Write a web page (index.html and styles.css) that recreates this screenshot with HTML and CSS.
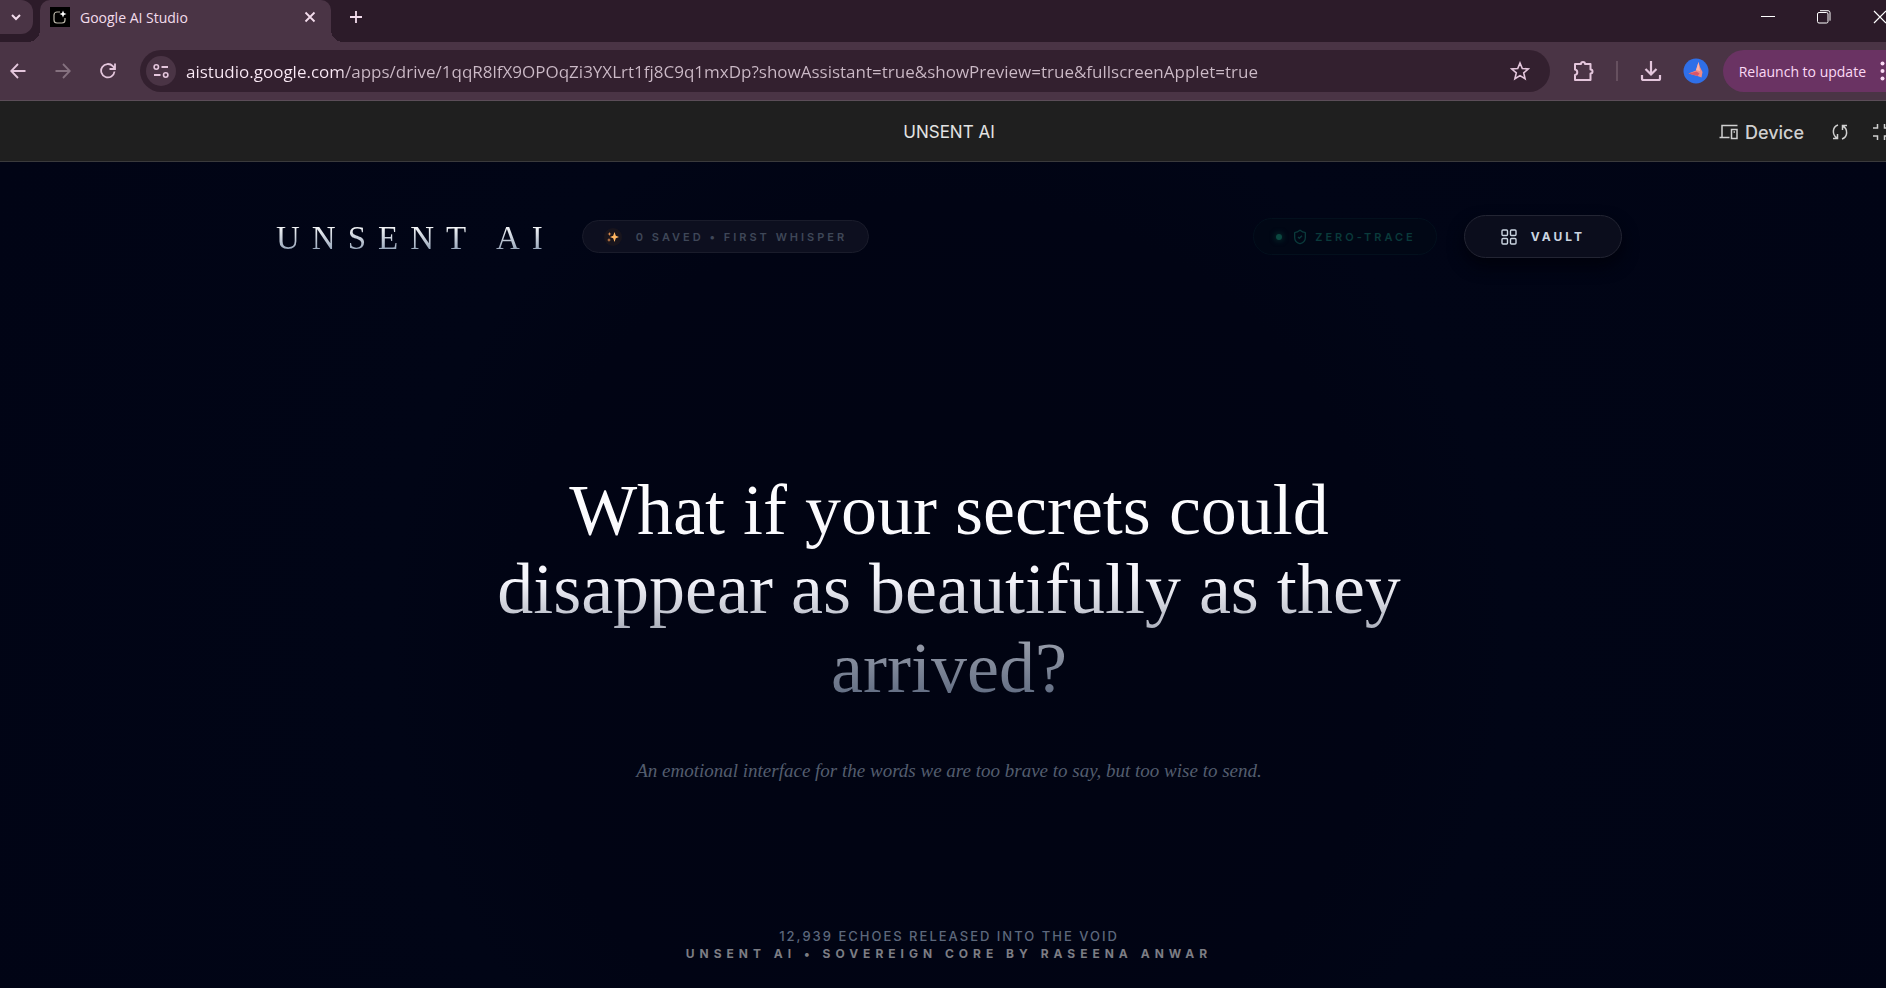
FILE: index.html
```html
<!DOCTYPE html>
<html lang="en">
<head>
    <meta charset="UTF-8">
    <meta name="viewport" content="width=device-width, initial-scale=1.0">
    <title>Google AI Studio</title>
    <link rel="stylesheet" href="styles.css">
</head>
<body>
<div class="window">
    <!-- Browser tabs -->
    <div class="tab-strip">
        <button class="tab-search" aria-label="Search tabs">
            <svg width="12" height="12" viewBox="0 0 12 12"><path d="M2 4l4 4 4-4" stroke-width="2"/></svg>
        </button>
        <div class="tab">
            <svg class="favicon" width="20" height="20" viewBox="0 0 20 20">
                <rect width="20" height="20" fill="#000" stroke="none"/>
                <path d="M10 5H7a3 3 0 0 0-3 3v5a3 3 0 0 0 3 3h5a3 3 0 0 0 3-3v-2" stroke="#b9b5a8" stroke-width="1.2"/>
                <path d="M13 3.500l1 2.500 2.500 1-2.500 1-1 2.500-1-2.500-2.500-1 2.500-1z" fill="#fff" stroke="none"/>
            </svg>
            <span class="tab-title">Google AI Studio</span>
            <button class="icon-btn" aria-label="Close tab">
                <svg width="12" height="12" viewBox="0 0 12 12"><path d="M1.500 1.500l9 9M10.500 1.500l-9 9" stroke-width="1.800"/></svg>
            </button>
        </div>
        <button class="icon-btn new-tab" aria-label="New tab">
            <svg width="14" height="14" viewBox="0 0 14 14"><path d="M7 1v12M1 7h12" stroke-width="1.800"/></svg>
        </button>
        <div class="window-controls">
            <button class="icon-btn" aria-label="Minimize"><svg width="14" height="14" viewBox="0 0 14 14"><path d="M0 6.500h14" stroke="#fff"/></svg></button>
            <button class="icon-btn" aria-label="Restore"><svg width="14" height="14" viewBox="0 0 14 14"><rect x=".5" y="2.500" width="10.500" height="10.500" rx="1.500" stroke="#fff"/><path d="M3 .7h8a2 2 0 0 1 2 2v8" stroke="#fff"/></svg></button>
            <button class="icon-btn" aria-label="Close"><svg width="14" height="14" viewBox="0 0 14 14"><path d="M1 1l12 12M13 1L1 13" stroke="#fff" stroke-width="1.200"/></svg></button>
        </div>
    </div>

    <!-- Address bar -->
    <div class="toolbar">
        <div class="nav-buttons">
            <button class="icon-btn" aria-label="Back"><svg width="16" height="16" viewBox="0 0 16 16"><path d="M15.500 8H1.500M8 1L1.200 8 8 15" stroke-width="1.800"/></svg></button>
            <button class="icon-btn disabled" aria-label="Forward" disabled><svg width="16" height="16" viewBox="0 0 16 16"><path d="M.5 8h14M8 1l6.800 7L8 15" stroke-width="1.800"/></svg></button>
            <button class="icon-btn" aria-label="Reload"><svg width="16" height="16" viewBox="0 0 16 16"><path d="M14.500 8.500A6.700 6.700 0 1 1 12.800 3.200L14.800 5.500M15 .5V6H9.500" stroke-width="1.800"/></svg></button>
        </div>
        <div class="omnibox">
            <button class="site-info" aria-label="Site information">
                <svg width="16" height="16" viewBox="0 0 16 16"><circle cx="3.300" cy="4" r="2.200" stroke-width="1.600"/><path d="M8.500 4H15M1 12h6.500" stroke-width="1.800"/><circle cx="12.700" cy="12" r="2.200" stroke-width="1.600"/></svg>
            </button>
            <input class="url" type="text" aria-label="Address" value="aistudio.google.com/apps/drive/1qqR8lfX9OPOqZi3YXLrt1fj8C9q1mxDp?showAssistant=true&amp;showPreview=true&amp;fullscreenApplet=true">
            <button class="icon-btn" aria-label="Bookmark this tab">
                <svg width="20" height="20" viewBox="0 0 20 20"><path d="M10 2l2.300 5.500 6 .5-4.600 3.900 1.400 5.800L10 14.600l-5.100 3.100 1.400-5.800L1.700 8l6-.5z" stroke-width="1.600"/></svg>
            </button>
        </div>
        <div class="extras">
            <button class="icon-btn" aria-label="Extensions">
                <svg width="22" height="22" viewBox="0 0 22 22"><path d="M2 4h6a2 2 0 0 1 4 0h5.500v5.500a2 2 0 0 1 0 4V20H2v-5a2.800 2.800 0 0 0 0-5.500z" stroke-width="2" stroke-linejoin="round"/></svg>
            </button>
            <span class="divider"></span>
            <button class="icon-btn" aria-label="Downloads">
                <svg width="22" height="22" viewBox="0 0 22 22"><path d="M11 1v13M5.500 9l5.500 5.500L16.500 9M2 15v3.500A1.500 1.500 0 0 0 3.500 20h15a1.500 1.500 0 0 0 1.500-1.500V15" stroke-width="2.200"/></svg>
            </button>
            <button class="icon-btn" aria-label="Profile">
                <svg width="26" height="26" viewBox="0 0 26 26"><circle cx="13" cy="13" r="12.500" fill="#2f6fe8" stroke="none"/><path d="M15.500 4l1.500 5 2.500 5-1 5.500-4-1.500-9-2.500 7.500-3z" fill="#f28b82" stroke="none"/><path d="M13 12l2.500-8 1.500 9z" fill="#ffb3a7" stroke="none"/><path d="M5.500 15.500l8-2 3 2-2 2.500z" fill="#d9566b" stroke="none"/></svg>
            </button>
            <button class="relaunch">
                Relaunch to update
                <svg width="5" height="20" viewBox="0 0 5 20"><g fill="#fbd9f5" stroke="none"><circle cx="2.500" cy="2.500" r="2"/><circle cx="2.500" cy="10" r="2"/><circle cx="2.500" cy="17.500" r="2"/></g></svg>
            </button>
        </div>
    </div>

    <!-- AI Studio bar -->
    <div class="app-bar">
        <span class="app-name">UNSENT AI</span>
        <div class="app-actions">
            <button class="device">
                <svg width="20" height="16" viewBox="0 0 20 16"><path d="M18.500 1.500H3V13M.5 13.500h10M12.500 5.500h5.500v9h-5.500zM14.500 8h1.500" stroke-width="1.500"/></svg>
                Device
            </button>
            <button class="icon-btn" aria-label="Reload app"><svg width="18" height="18" viewBox="0 0 18 18"><path d="M7 2C1 4 1 12 6 15M2 15.500h4.500V11M11 16c6-2 6-10 1-13M16 2.500h-4.500V7" stroke-width="1.500"/></svg></button>
            <button class="icon-btn" aria-label="Exit full screen"><svg width="18" height="18" viewBox="0 0 18 18"><path d="M1 5h4.500V1M12.500 1v4H17M1 13h4.500v4M12.500 17v-4H17" stroke-width="1.500"/></svg></button>
        </div>
    </div>

    <!-- Unsent AI applet -->
    <div class="applet">
        <header class="site-header">
            <div class="brand">
                <span class="logo">UNSENT AI</span>
                <div class="pill saved">
                    <svg width="18" height="18" viewBox="0 0 18 18"><circle cx="9" cy="9" r="9" fill="#19151d" stroke="none"/><path d="M10.500 4l1.300 3.700L15 9l-3.200 1.300L10.500 14l-1.300-3.700L6 9l3.200-1.300z" fill="#ffb661" stroke="none"/><path d="M5.500 4l.6 1.500 1.400.5-1.400.5-.6 1.500-.6-1.500L3.500 6l1.400-.5zM5 10l.6 1.500 1.400.5-1.400.5L5 14l-.6-1.500L3 12l1.400-.5z" fill="#d98a4e" stroke="none"/></svg>
                    <span>0 SAVED • FIRST WHISPER</span>
                </div>
            </div>
            <div class="status">
                <div class="pill trace">
                    <span class="dot"></span>
                    <svg width="16" height="16" viewBox="0 0 24 24"><path d="M20 13c0 5-3.500 7.500-7.660 8.950a1 1 0 0 1-.67-.01C7.500 20.500 4 18 4 13V6a1 1 0 0 1 1-1c2 0 4.500-1.200 6.240-2.720a1.170 1.170 0 0 1 1.520 0C14.510 3.810 17 5 19 5a1 1 0 0 1 1 1zM9 12l2 2 4-4" stroke-width="2"/></svg>
                    <span>ZERO-TRACE</span>
                </div>
                <button class="vault">
                    <svg width="16" height="16" viewBox="0 0 16 16"><g stroke-width="1.400"><rect x="1" y="1" width="5.500" height="5.500" rx="1"/><rect x="9.500" y="1" width="5.500" height="5.500" rx="1"/><rect x="1" y="9.500" width="5.500" height="5.500" rx="1"/><rect x="9.500" y="9.500" width="5.500" height="5.500" rx="1"/></g></svg>
                    <span>VAULT</span>
                </button>
            </div>
        </header>

        <main class="hero">
            <h1>What if your secrets could disappear as beautifully as they arrived?</h1>
            <p>An emotional interface for the words we are too brave to say, but too wise to send.</p>
        </main>

        <footer>
            <p class="echoes">12,939 ECHOES RELEASED INTO THE VOID</p>
            <p class="credit">UNSENT AI • SOVEREIGN CORE BY RASEENA ANWAR</p>
        </footer>
    </div>
</div>
</body>
</html>
```
FILE: styles.css
```css
* {
    box-sizing: border-box;
}
body {
    margin: 0;
    overflow: hidden;
    background-color: #010415;
    font-family: "Open Sans", "Noto Sans", sans-serif;
}
/* window runs slightly past the right edge of the screen */
.window {
    width: calc(100% + 12px);
    height: 100vh;
    display: flex;
    flex-direction: column;
}
svg {
    display: block;
    flex-shrink: 0;
    fill: none;
    stroke: currentColor;
}
button {
    border: none;
    padding: 0;
    background: none;
    color: inherit;
    font-family: inherit;
    cursor: pointer;
}

/* Tabs */
.tab-strip {
    display: flex;
    height: 42px;
    background-color: #2c1b29;
    color: #f3dcec;
}
.tab-search {
    width: 33px;
    height: 34px;
    padding-left: 10px;
    border-radius: 0 12px 12px 0;
    background-color: #4a3445;
}
.tab {
    position: relative;
    display: flex;
    align-items: center;
    width: 291px;
    margin-left: 7px;
    padding: 0 15px 8px 10px;
    border-radius: 10px 10px 0 0;
    background-color: #4a3445;
}
/* curved feet of the active tab */
.tab::before, .tab::after {
    content: "";
    position: absolute;
    bottom: 0;
    width: 12px;
    height: 12px;
}
.tab::before {
    right: 100%;
    background: radial-gradient(circle at 0 0, transparent 12px, #4a3445 12px);
}
.tab::after {
    left: 100%;
    background: radial-gradient(circle at 100% 0, transparent 12px, #4a3445 12px);
}
.tab-title {
    flex: 1;
    margin-left: 10px;
    font-size: 14px;
}
.new-tab {
    margin: 0 0 8px 18px;
}
.window-controls {
    display: flex;
    gap: 42px;
    margin-left: auto;
    padding: 0 11px 8px 0;
}

/* Address bar */
.toolbar {
    display: flex;
    align-items: center;
    height: 59px;
    padding-left: 10px;
    background-color: #4a3445;
    border-bottom: 1px solid #5b4d58;
    color: #e4c6dc;
}
.nav-buttons {
    display: flex;
    gap: 29px;
    width: 130px;
}
.disabled {
    color: #85717f;
}
.omnibox {
    display: flex;
    align-items: center;
    flex: 1;
    height: 42px;
    padding: 0 20px 0 6px;
    border-radius: 21px;
    background-color: #33202f;
}
.site-info {
    display: flex;
    align-items: center;
    justify-content: center;
    width: 30px;
    height: 30px;
    border-radius: 50%;
    background-color: #4a3445;
}
.url {
    flex: 1;
    margin-left: 10px;
    padding: 0;
    border: none;
    outline: none;
    background: linear-gradient(to right, #fbeaf6 157px, #ccbac7 157px);
    background-clip: text;
    color: transparent;
    font-family: inherit;
    font-size: 17px;
}
.extras {
    display: flex;
    align-items: center;
    margin-left: 23px;
}
.divider {
    width: 2px;
    height: 20px;
    margin: 0 22px 0 21px;
    background-color: #66505f;
}
.extras .icon-btn + .icon-btn {
    margin-left: 21px;
}
.relaunch {
    display: flex;
    align-items: center;
    gap: 14px;
    height: 42px;
    margin-left: 14px;
    padding: 0 13px 0 16px;
    border-radius: 21px 0 0 21px;
    background-color: #6a3363;
    color: #fbd9f5;
    font-size: 14px;
}

/* App bar */
.app-bar {
    display: grid;
    grid-template-columns: 1fr auto 1fr;
    align-items: center;
    height: 61px;
    padding-top: 2px;
    background-color: #1f1f1f;
    border-bottom: 1px solid #3a3a3c;
    color: #e3e3e3;
    font-family: Inter, sans-serif;
}
.app-name {
    grid-column: 2;
    font-size: 17px;
}
.app-actions {
    display: flex;
    align-items: center;
    justify-content: flex-end;
    gap: 23px;
    padding-right: 8px;
    color: #d0d0d0;
}
.device {
    display: flex;
    align-items: center;
    gap: 6px;
    margin-right: 4px;
    font-size: 18px;
    font-weight: 500;
}

/* Applet */
.applet {
    display: flex;
    flex-direction: column;
    flex: 1;
    background: radial-gradient(circle at 50% 58%, #010412 0, #010414 440px, #010516 560px, #010415 100%);
    font-family: Inter, sans-serif;
}
.site-header {
    display: flex;
    align-items: center;
    justify-content: space-between;
    width: 100%;
    max-width: 1346px;
    margin: 0 auto;
    padding-top: 53px;
}
.brand, .status {
    display: flex;
    align-items: center;
}
.logo {
    padding-top: 4px;
    background: linear-gradient(to bottom, #fff 20%, #94a3b8 85%);
    background-clip: text;
    color: transparent;
    font-family: "Liberation Serif", serif;
    font-size: 33px;
    letter-spacing: 12px;
}
.brand {
    gap: 27px;
}
.status {
    gap: 27px;
}
.pill {
    display: flex;
    align-items: center;
    border-radius: 24px;
    font-size: 11px;
    font-weight: 600;
    letter-spacing: 3px;
    white-space: nowrap;
}
.saved {
    gap: 14px;
    height: 33px;
    padding: 0 21px;
    background-color: #0d0f1f;
    border: 1px solid #1a1c2b;
    color: #3f4758;
}
.trace {
    gap: 7px;
    height: 37px;
    padding: 0 20px 0 22px;
    background-color: #010715;
    border: 1px solid #03101d;
    color: #0a3a3b;
}
.dot {
    width: 6px;
    height: 6px;
    margin-right: 3px;
    border-radius: 50%;
    background-color: #0b4840;
    box-shadow: 0 0 6px #0b4840;
}
.vault {
    display: flex;
    align-items: center;
    gap: 14px;
    height: 43px;
    padding: 0 36px;
    border: 1px solid #232533;
    border-radius: 22px;
    background-color: #0b0d1c;
    box-shadow: 0 8px 16px #01020c;
    color: #cbd5e1;
    font-size: 12px;
    font-weight: 700;
    letter-spacing: 3px;
}
.hero {
    display: flex;
    flex-direction: column;
    align-items: center;
    justify-content: center;
    flex: 1;
    padding-top: 69px;
    text-align: center;
}
.hero h1 {
    max-width: 1000px;
    margin: 0 0 49px;
    background: linear-gradient(to bottom, #fff 0, #f5f5fb 46%, #9298a6 74%, #56637a 100%);
    background-clip: text;
    color: transparent;
    font-family: "Liberation Serif", serif;
    font-size: 72px;
    font-weight: 400;
    line-height: 79px;
}
.hero p {
    margin: 0;
    color: #535d6e;
    font-family: "Liberation Serif", serif;
    font-size: 19px;
    font-style: italic;
    line-height: 28px;
}
footer {
    padding-bottom: 26px;
    text-align: center;
    line-height: 17px;
}
footer p {
    margin: 0;
}
.echoes {
    color: #5d687c;
    font-size: 13px;
    font-weight: 500;
    letter-spacing: 2px;
}
.credit {
    color: #7c7d84;
    font-size: 12px;
    font-weight: 700;
    letter-spacing: 5px;
}
```
